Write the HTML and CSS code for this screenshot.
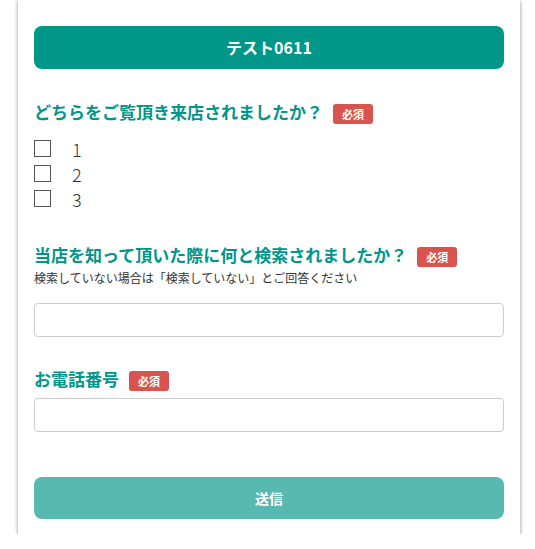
FILE: index.html
```html
<!DOCTYPE html>
<html lang="ja">
<head>
<meta charset="utf-8">
<link rel="stylesheet" href="styles.css">
</head>
<body>
<div class="card">
  <div class="title">テスト0611</div>

  <div class="q q1">
    <div class="label-row"><span class="label">どちらをご覧頂き来店されましたか？</span><span class="badge">必須</span></div>
    <div class="options">
      <label class="opt"><span class="box"></span><span class="opt-text">1</span></label>
      <label class="opt"><span class="box"></span><span class="opt-text">2</span></label>
      <label class="opt"><span class="box"></span><span class="opt-text">3</span></label>
    </div>
  </div>

  <div class="q q2">
    <div class="label-row"><span class="label">当店を知って頂いた際に何と検索されましたか？</span><span class="badge">必須</span></div>
    <div class="hint">検索していない場合は「検索していない」とご回答ください</div>
    <div class="input input-a"></div>
  </div>

  <div class="q q3">
    <div class="label-row"><span class="label">お電話番号</span><span class="badge">必須</span></div>
    <div class="input input-b"></div>
  </div>

  <div class="submit">送信</div>
</div>
</body>
</html>
```

FILE: styles.css
```css
html, body {
  margin: 0;
  padding: 0;
  background: #ffffff;
}
body {
  font-family: "Noto Sans CJK JP", "Noto Sans", sans-serif;
  color: #333;
}
.card {
  margin-left: 18px;
  width: 502px;
  box-sizing: border-box;
  background: #fff;
  padding: 26px 16px 15px 16px;
  box-shadow: 0 1px 4px rgba(0, 0, 0, 0.45);
}
.title {
  height: 43px;
  border-radius: 8px;
  background: #009688;
  color: #fff;
  font-weight: 700;
  font-size: 16px;
  display: flex;
  align-items: center;
  justify-content: center;
  padding-bottom: 2px;
  box-sizing: border-box;
}
.label-row {
  display: flex;
  align-items: center;
  height: 21px;
}
.label {
  color: #00968a;
  font-weight: 700;
  font-size: 17px;
  line-height: 21px;
  padding-bottom: 5px;
}
.badge {
  margin-left: 10px;
  width: 40px;
  height: 20px;
  border-radius: 3px;
  background: #d9534f;
  color: #fff;
  font-size: 11px;
  font-weight: 700;
  display: flex;
  align-items: center;
  justify-content: center;
}
.q1 {
  margin-top: 34px;
}
.options {
  margin-top: 12px;
  display: flex;
  flex-direction: column;
}
.opt {
  display: flex;
  align-items: center;
  height: 25px;
}
.box {
  width: 15px;
  height: 15px;
  border: 1px solid #555;
  background: #fff;
}
.opt-text {
  margin-left: 21px;
  font-size: 18px;
  font-weight: 300;
  color: #333;
}
.q2 {
  margin-top: 35px;
}
.hint {
  margin-top: 3px;
  font-size: 12px;
  line-height: 16px;
  color: #333;
}
.input {
  height: 32px;
  border: 1px solid #ccc;
  border-radius: 4px;
  background: #fff;
}
.input-a {
  margin-top: 17px;
}
.q3 {
  margin-top: 33px;
}
.input-b {
  margin-top: 7px;
}
.submit {
  margin-top: 45px;
  height: 42px;
  border-radius: 8px;
  background: #58b9b1;
  color: #fff;
  font-weight: 700;
  font-size: 14px;
  display: flex;
  align-items: center;
  justify-content: center;
}
```
